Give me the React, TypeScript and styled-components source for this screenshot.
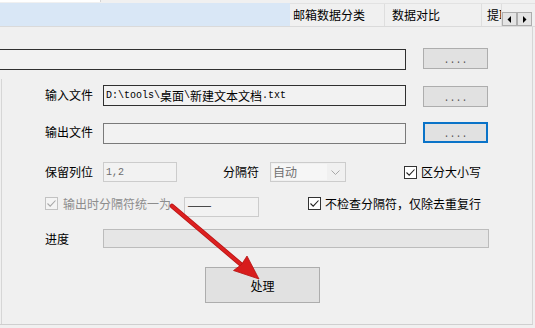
import React from 'react';
import styled, { createGlobalStyle } from 'styled-components';

const Global = createGlobalStyle`
  html, body { margin: 0; padding: 0; background: #f0f0f0; }
  body {
    width: 535px; height: 328px; overflow: hidden;
    font-family: "Noto Sans CJK SC", "Microsoft YaHei", sans-serif;
    font-size: 12px; color: #000;
  }
`;

const Window = styled.div`
  position: relative;
  width: 535px;
  height: 328px;
  background: #f0f0f0;
  overflow: hidden;
  display: flex;
  flex-direction: column;
`;

const TopStrip = styled.div`
  height: 3px;
  display: flex;
  flex: none;
`;

const TopWhite = styled.div`
  width: 100px;
  height: 2px;
  background: #ffffff;
  border-right: 1px solid #d4d4d4;
`;

const TabBar = styled.div`
  height: 24px;
  box-sizing: border-box;
  flex: none;
  display: flex;
  border-bottom: 1px solid #dadada;
`;

const TabFill = styled.div`
  width: 290px;
  flex: none;
  background: #d9e7f6;
`;

const Tabs = styled.div`
  flex: 1;
  min-width: 0;
  display: flex;
  border-top: 1px solid #e2e2e2;
  background: #f0f0f0;
`;

const Tab = styled.div<{ $w?: number; $pl: number }>`
  ${(p) => (p.$w ? `width: ${p.$w}px; flex: none;` : 'flex: 1; min-width: 0;')}
  box-sizing: border-box;
  border-right: 1px solid #dedede;
  padding-left: ${(p) => p.$pl}px;
  line-height: 22px;
  font-size: 12px;
  white-space: nowrap;
  overflow: hidden;
`;

const ScrollPair = styled.div`
  display: flex;
  align-self: flex-end;
  margin-right: 3px;
  flex: none;
`;

const ScrollBtn = styled.div`
  width: 15px;
  height: 14px;
  box-sizing: border-box;
  border: 1px solid #adadad;
  background: #e4e4e4;
  display: flex;
  align-items: center;
  justify-content: center;
`;

const Panel = styled.div`
  width: 533px;
  height: 298px;
  box-sizing: border-box;
  flex: none;
  border-right: 1px solid #d6d6d6;
  border-bottom: 1px solid #cfcfcf;
  display: flex;
  flex-direction: column;
`;

const Body = styled.div`
  flex: 1;
  margin-top: 9px;
  margin-left: 1px;
  border-left: 1px solid #d6d6d6;
  display: flex;
  flex-direction: column;
`;

const Row = styled.div<{ $mt: number; $h: number; $pl?: number; $top?: boolean }>`
  display: flex;
  align-items: ${(p) => (p.$top ? 'flex-start' : 'center')};
  height: ${(p) => p.$h}px;
  margin-top: ${(p) => p.$mt}px;
  padding-left: ${(p) => p.$pl ?? 0}px;
  flex: none;
`;

const Label = styled.span<{ $w?: number; $ml?: number; $mt?: number; $muted?: boolean }>`
  ${(p) => (p.$w ? `width: ${p.$w}px;` : '')}
  margin-left: ${(p) => p.$ml ?? 0}px;
  margin-top: ${(p) => p.$mt ?? 0}px;
  flex: none;
  font-size: 12px;
  line-height: 14px;
  white-space: nowrap;
  color: ${(p) => (p.$muted ? '#8d8d8d' : '#000')};
`;

type Tone = 'dark' | 'mid' | 'disabled';

const Field = styled.div<{ $w: number; $h?: number; $tone: Tone; $noLeft?: boolean; $ml?: number; $mt?: number }>`
  width: ${(p) => p.$w}px;
  height: ${(p) => p.$h ?? 21}px;
  margin-left: ${(p) => p.$ml ?? 0}px;
  margin-top: ${(p) => p.$mt ?? 0}px;
  box-sizing: border-box;
  flex: none;
  border: 1px solid
    ${(p) => (p.$tone === 'dark' ? '#303030' : p.$tone === 'mid' ? '#7a7a7a' : '#cccccc')};
  ${(p) => (p.$noLeft ? 'border-left: none;' : '')}
  background: #f2f2f2;
  display: flex;
  align-items: center;
  padding-left: 2px;
  overflow: hidden;
  white-space: nowrap;
`;

const Mono = styled.span<{ $muted?: boolean }>`
  font-family: "Liberation Mono", "Courier New", monospace;
  font-size: 10px;
  color: ${(p) => (p.$muted ? '#6d6d6d' : '#000')};
`;

const Cjk = styled.span`
  font-family: "Noto Sans CJK SC", sans-serif;
  font-size: 12px;
`;

const Dash = styled.span`
  font-family: "Liberation Sans", Arial, sans-serif;
  font-size: 12px;
  color: #4a4a4a;
  margin-left: 1px;
  margin-bottom: 2px;
  letter-spacing: -1px;
`;

const DotsButton = styled.div<{ $focused?: boolean; $mt?: number }>`
  width: 65px;
  height: 21px;
  margin-left: 17px;
  margin-top: ${(p) => p.$mt ?? 0}px;
  box-sizing: border-box;
  flex: none;
  border: ${(p) => (p.$focused ? '2px solid #0a73c8' : '1px solid #adadad')};
  background: #e1e1e1;
  display: flex;
  align-items: center;
  justify-content: center;
  padding-top: 3px;
  font-family: "Liberation Mono", monospace;
  font-size: 10px;
  color: #555;
`;

const Combo = styled.div`
  width: 76px;
  height: 20px;
  box-sizing: border-box;
  flex: none;
  border: 1px solid #cccccc;
  background: #f0f0f0;
  display: flex;
  align-items: center;
  justify-content: space-between;
  padding-right: 5px;
`;

const ComboText = styled.span`
  width: 54px;
  height: 16px;
  margin-left: 1px;
  background: #f6f6f6;
  color: #707070;
  font-size: 12px;
  line-height: 16px;
  padding-left: 1px;
`;

const Progress = styled.div`
  width: 386px;
  height: 19px;
  box-sizing: border-box;
  flex: none;
  border: 1px solid #bcbcbc;
  background: #e6e6e6;
`;

const ActionButton = styled.div`
  width: 115px;
  height: 36px;
  box-sizing: border-box;
  border: 1px solid #adadad;
  background: #e1e1e1;
  display: flex;
  align-items: center;
  justify-content: center;
  font-size: 12px;
  flex: none;
`;

const CheckWrap = styled.span<{ $ml?: number }>`
  display: inline-flex;
  flex: none;
  margin-left: ${(p) => p.$ml ?? 0}px;
`;

const Overlay = styled.svg`
  position: absolute;
  left: 0;
  top: 0;
  pointer-events: none;
`;

function Check({ disabled, ml }: { disabled?: boolean; ml?: number }) {
  const border = disabled ? '#c2c2c2' : '#333333';
  const mark = disabled ? '#a8a8a8' : '#222222';
  return (
    <CheckWrap $ml={ml}>
      <svg width="13" height="13" viewBox="0 0 13 13">
        <rect x="0.5" y="0.5" width="12" height="12" fill={disabled ? '#f4f4f4' : '#ffffff'} stroke={border} />
        <polyline points="2.5,6.5 5.2,9.2 10.5,3.5" fill="none" stroke={mark} strokeWidth="1.1" />
      </svg>
    </CheckWrap>
  );
}

function Tri({ dir }: { dir: 'l' | 'r' }) {
  return (
    <svg width="5" height="7" viewBox="0 0 5 7">
      {dir === 'l' ? <polygon points="4,0 4,7 0.5,3.5" fill="#000" /> : <polygon points="1,0 1,7 4.5,3.5" fill="#000" />}
    </svg>
  );
}

export default function App() {
  return (
    <>
      <Global />
      <Window>
        <TopStrip>
          <TopWhite />
        </TopStrip>
        <TabBar>
          <TabFill />
          <Tabs>
            <Tab $w={95} $pl={3}>邮箱数据分类</Tab>
            <Tab $w={97} $pl={7}>数据对比</Tab>
            <Tab $pl={5}>提取</Tab>
            <ScrollPair>
              <ScrollBtn>
                <Tri dir="l" />
              </ScrollBtn>
              <ScrollBtn>
                <Tri dir="r" />
              </ScrollBtn>
            </ScrollPair>
          </Tabs>
        </TabBar>
        <Panel>
          <Row $mt={21} $h={22} $top>
            <Field $w={406} $tone="dark" $noLeft $mt={1} />
            <DotsButton>....</DotsButton>
          </Row>
          <Body>
            <Row $mt={6} $h={22} $pl={43} $top>
              <Label $w={58} $mt={3}>输入文件</Label>
              <Field $w={303} $tone="dark">
                <Mono>D:\tools\</Mono>
                <Cjk>桌面</Cjk>
                <Mono>\</Mono>
                <Cjk>新建文本文档</Cjk>
                <Mono>.txt</Mono>
              </Field>
              <DotsButton $mt={1}>....</DotsButton>
            </Row>
            <Row $mt={15} $h={22} $pl={43} $top>
              <Label $w={58} $mt={3}>输出文件</Label>
              <Field $w={303} $tone="mid" $mt={1} />
              <DotsButton $focused>....</DotsButton>
            </Row>
            <Row $mt={18} $h={20} $pl={43}>
              <Label $w={58}>保留列位</Label>
              <Field $w={74} $h={20} $tone="disabled">
                <Mono $muted>1,2</Mono>
              </Field>
              <Label $ml={46} $w={47}>分隔符</Label>
              <Combo>
                <ComboText>自动</ComboText>
                <svg width="9" height="5" viewBox="0 0 9 5">
                  <polyline points="0.5,0.5 4.5,4.5 8.5,0.5" fill="none" stroke="#a8a8a8" strokeWidth="1" />
                </svg>
              </Combo>
              <Check ml={58} />
              <Label $ml={4}>区分大小写</Label>
            </Row>
            <Row $mt={15} $h={20} $pl={43} $top>
              <Check disabled />
              <Label $ml={5} $w={121} $muted>输出时分隔符统一为</Label>
              <Field $w={75} $h={20} $tone="disabled">
                <Dash>——</Dash>
              </Field>
              <Check ml={49} />
              <Label $ml={4}>不检查分隔符，仅除去重复行</Label>
            </Row>
            <Row $mt={12} $h={19} $pl={43}>
              <Label $w={58}>进度</Label>
              <Progress />
            </Row>
            <Row $mt={19} $h={36} $pl={203}>
              <ActionButton>处理</ActionButton>
            </Row>
          </Body>
        </Panel>
        <Overlay width="535" height="328" viewBox="0 0 535 328">
          <line x1="172" y1="206" x2="244" y2="267" stroke="#b81414" strokeWidth="4.6" strokeLinecap="round" />
          <line x1="172" y1="206" x2="244" y2="267" stroke="#dc2020" strokeWidth="3" strokeLinecap="round" />
          <polygon points="259,279 233.5,270.5 241.5,264.5 247,256" fill="#d81c1c" stroke="#b51313" strokeWidth="0.8" />
        </Overlay>
      </Window>
    </>
  );
}
